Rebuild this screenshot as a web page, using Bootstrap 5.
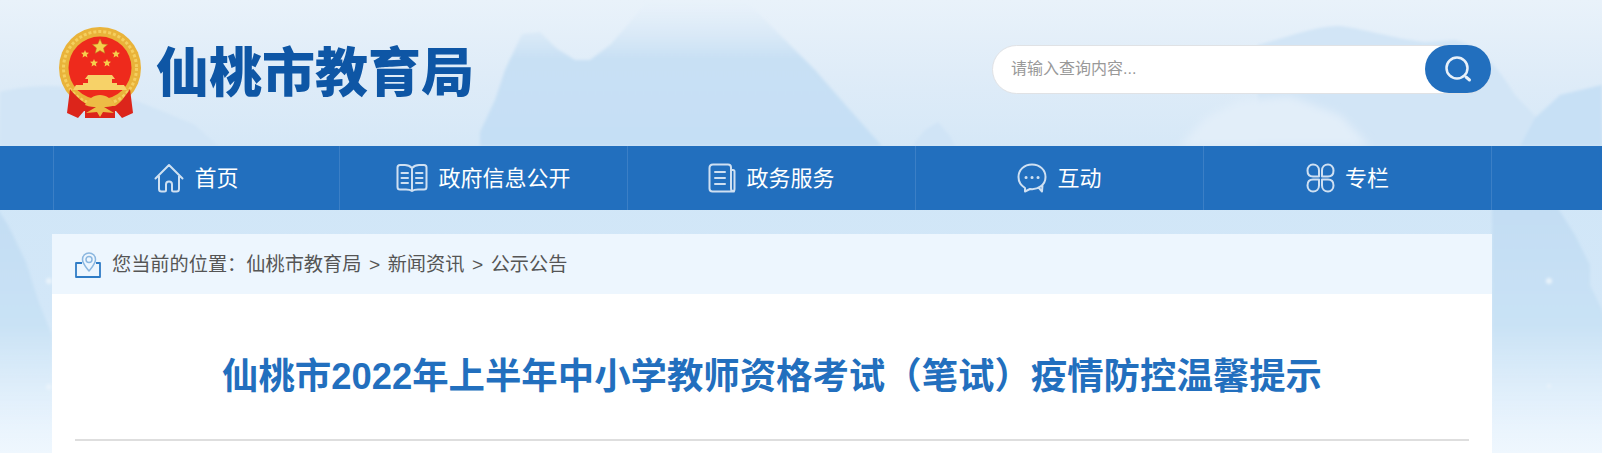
<!DOCTYPE html>
<html lang="zh-CN">
<head>
    <meta charset="utf-8">
    <title>仙桃市教育局</title>
    <link href="https://cdn.jsdelivr.net/npm/bootstrap@5.3.0/dist/css/bootstrap.min.css" rel="stylesheet">
    <style>
        html, body { height: 100%; }
        body {
            font-family: "Liberation Sans", "Noto Sans CJK SC", sans-serif;
            background: #eef6fd;
            overflow: hidden;
        }
        .page-wrap { height: 453px; overflow: hidden; z-index: 0; }
        .page-bg { position: absolute; top: 0; left: 0; z-index: -1; }
        .site-inner { width: 1440px; margin-left: 52px; }

        .top-head { height: 146px; }
        .emblem { width: 86px; height: 92px; margin-left: 5px; flex: none; }
        .site-name {
            color: #0e56a5;
            font-size: 53px;
            font-weight: 900;
            line-height: 1;
            margin: 0 0 0 13px;
        }
        .search-box {
            width: 499px;
            height: 49px;
            margin-right: 1px;
            border: 1px solid #e0e2e5;
        }
        .search-box .form-control {
            border: 0;
            background: transparent;
            box-shadow: none;
            padding: 0 0 0 18px;
            font-size: 16px;
            color: #555;
        }
        .search-box .form-control::placeholder { color: #999; }
        .search-btn {
            width: 66px;
            height: 48px;
            margin: -1px -1px -1px 0;
            padding: 0;
            border: 0;
            border-radius: 24px;
            background: #226fbe;
            flex: none;
        }
        .search-btn:hover { background: #226fbe; }

        .main-nav { background: #226fbe; height: 64px; }
        .main-nav .site-inner { height: 64px; border-left: 1px solid #3b7fc6; margin-left: 53px; width: 1439px; }
        .nav-cell {
            width: 288px;
            height: 64px;
            gap: 10px;
            color: #fff;
            font-size: 22px;
            text-decoration: none;
            border-right: 1px solid #3b7fc6;
        }
        .nav-cell:first-child { width: 286px; }
        .nav-cell:hover { color: #fff; }
        .nav-cell svg { flex: none; fill: none; stroke: #cfe0f2; stroke-width: 2; stroke-linejoin: round; stroke-linecap: round; }

        .panel-box { margin-top: 24px; background: #fff; height: 300px; }
        .crumb-bar {
            height: 60px;
            background: #edf6fe;
            padding: 2px 0 0 23px;
            gap: 11px;
            color: #555;
            font-size: 19.200px;
        }
        .crumb-bar a { color: #555; text-decoration: none; }
        .crumb-sep { margin: 0 7.500px; }
        .article-title {
            color: #226fbe;
            font-size: 36.400px;
            font-weight: 700;
            line-height: 44px;
            text-align: center;
            margin: 61px 23px 0;
            padding-bottom: 40px;
            border-bottom: 2px solid #dedede;
            white-space: nowrap;
        }
    </style>
</head>
<body>
<div class="page-wrap position-relative">
    <!-- fundo: montanhas -->
    <svg class="page-bg" width="1602" height="453" viewBox="0 0 1602 453" aria-hidden="true">
        <defs>
            <linearGradient id="skyTop" x1="0" y1="0" x2="0" y2="1">
                <stop offset="0" stop-color="#e9f2fa"/>
                <stop offset="0.5" stop-color="#dfecf8"/>
                <stop offset="1" stop-color="#d6e8f7"/>
            </linearGradient>
            <linearGradient id="skyLow" x1="0" y1="0" x2="0" y2="1">
                <stop offset="0" stop-color="#d0e6f7"/>
                <stop offset="0.55" stop-color="#d3e7f8"/>
                <stop offset="1" stop-color="#eff7fe"/>
            </linearGradient>
            <linearGradient id="hill" gradientUnits="userSpaceOnUse" x1="0" y1="0" x2="0" y2="146">
                <stop offset="0" stop-color="#dfecf8" stop-opacity="0"/>
                <stop offset="0.4" stop-color="#c8e0f4"/>
                <stop offset="1" stop-color="#c5dff5"/>
            </linearGradient>
            <linearGradient id="hillLow" gradientUnits="userSpaceOnUse" x1="0" y1="210" x2="0" y2="440">
                <stop offset="0" stop-color="#c3ddf3"/>
                <stop offset="0.5" stop-color="#c9e2f5"/>
                <stop offset="1" stop-color="#e8f3fc" stop-opacity="0"/>
            </linearGradient>
            <filter id="soft"><feGaussianBlur stdDeviation="1.500"/></filter>
            <filter id="softer" x="-20%" y="-20%" width="140%" height="140%"><feGaussianBlur stdDeviation="4"/></filter>
        </defs>
        <rect width="1602" height="146" fill="url(#skyTop)"/>
        <rect y="146" width="1602" height="307" fill="url(#skyLow)"/>
        <g filter="url(#soft)">
            <path d="M0 92 C30 84 70 84 105 92 C140 100 170 115 195 125 L218 146 L0 146Z" fill="#d2e5f6"/>
            <path d="M480 132 L495 100 L505 70 L522 34 L540 32 L556 48 L575 60 L590 60 L610 45 L632 20 L648 0 L745 0 L790 45 L815 70 L850 110 L882 146 L480 146Z" fill="url(#hill)"/>
            <path d="M912 146 L925 130 L938 122 L950 136 L955 146Z" fill="#d0e4f6"/>
            <path d="M1258 45 C1290 36 1320 25 1340 26 C1370 30 1390 38 1425 42 L1455 40 C1480 45 1500 70 1515 95 L1537 118 L1560 95 L1602 85 L1602 146 L1258 146Z" fill="#d2e5f6"/>
            <path d="M1535 118 L1560 95 L1602 85 L1602 146 L1520 146Z" fill="#c7e0f5"/>
        </g>
        <path d="M1180 146 L1205 118 L1240 100 L1290 96 L1340 115 L1370 146Z" fill="#e2eef9" filter="url(#softer)"/>
        <g filter="url(#soft)">
            <path d="M-5 205 L8 225 L26 262 L38 300 L52 335 L52 453 L-5 453Z" fill="url(#hillLow)"/>
            <path d="M1492 205 L1556 205 L1575 235 L1590 265 L1590 285 L1607 320 L1607 453 L1492 453Z" fill="url(#hillLow)"/>
        </g>
        <g fill="#e9f3fb" filter="url(#soft)">
            <circle cx="49" cy="281" r="3"/>
            <circle cx="49" cy="387" r="3"/>
            <circle cx="1549" cy="281" r="3"/>
            <circle cx="1549" cy="386" r="2"/>
        </g>
    </svg>

    <header class="top-head site-inner d-flex align-items-center justify-content-between">
        <div class="d-flex align-items-center">
            <svg class="emblem" viewBox="57 27 86 92" aria-label="国徽">
                <circle cx="100" cy="68" r="41" fill="#e9b33a"/>
                <circle cx="100" cy="68" r="36.500" fill="none" stroke="#f5cf5f" stroke-width="3" stroke-dasharray="3 2"/>
                <circle cx="100" cy="68" r="31.500" fill="#ee2a1c"/>
                <path d="M100 39 L102.200 44 L107.600 44.500 L103.500 48 L104.700 53.300 L100 50.500 L95.300 53.300 L96.500 48 L92.400 44.500 L97.800 44Z" fill="#f6cf4c" stroke="#b98a20" stroke-width=".5"/>
                <path d="M85 50 L86.100 52.600 L89 52.800 L86.800 54.700 L87.500 57.500 L85 56 L82.500 57.500 L83.200 54.700 L81 52.800 L83.900 52.600Z" fill="#f6cf4c"/>
                <path d="M116 50 L117.100 52.600 L120 52.800 L117.800 54.700 L118.500 57.500 L116 56 L113.500 57.500 L114.200 54.700 L112 52.800 L114.900 52.600Z" fill="#f6cf4c"/>
                <path d="M94 59 L95.100 61.600 L98 61.800 L95.800 63.700 L96.500 66.500 L94 65 L91.500 66.500 L92.200 63.700 L90 61.800 L92.900 61.600Z" fill="#f6cf4c"/>
                <path d="M107 59 L108.100 61.600 L111 61.800 L108.800 63.700 L109.500 66.500 L107 65 L104.500 66.500 L105.200 63.700 L103 61.800 L105.900 61.600Z" fill="#f6cf4c"/>
                <!-- portao -->
                <path d="M88 75 L112 75 L115 79 L112 79 L112 83 L88 83 L88 79 L85 79Z" fill="#f7d268"/>
                <path d="M76 85 L124 85 L127 90 L73 90Z" fill="#f7d268"/>
                <path d="M83 83 H117 V85 H83Z" fill="#f7d268"/>
                <!-- faixas vermelhas -->
                <path d="M70 89 C76 97 84 103 90 106 L115 106 C120 103 125 97 130 89 L133 113 L122 118 L116 111 L84 111 L78 118 L67 113Z" fill="#dc251b"/>
                <path d="M85 111 H115 V118 H85Z" fill="#dc251b"/>
                <path d="M100 95 C106 95 112 99 115 105 C110 107 106 107 104 107 L114 113 L103 112 L100 117 L97 112 L86 113 L96 107 C94 107 90 107 85 105 C88 99 94 95 100 95Z" fill="#edbb45"/>
            </svg>
            <h1 class="site-name">仙桃市教育局</h1>
        </div>
        <form class="search-box d-flex align-items-center bg-white rounded-pill mb-2" onsubmit="return false">
            <input class="form-control" type="text" placeholder="请输入查询内容...">
            <button class="btn search-btn d-flex align-items-center justify-content-center" type="submit" aria-label="搜索">
                <svg width="30" height="30" viewBox="0 0 30 30" fill="none" stroke="#e8f1fa" stroke-linecap="round">
                    <circle cx="14" cy="14" r="10.500" stroke-width="2.500"/>
                    <path d="M23 23 L26.500 26" stroke-width="3"/>
                </svg>
            </button>
        </form>
    </header>

    <nav class="main-nav">
        <div class="site-inner d-flex">
            <a class="nav-cell d-flex align-items-center justify-content-center" href="#">
                <svg width="30" height="30" viewBox="0 0 30 30"><path d="M1.500 15.500 L15 2 L28.500 15.500 M5 13 L5 26 Q5 28.500 7.500 28.500 L10.500 28.500 Q12 28.500 12 27 L12 21.500 Q12 18.500 15 18.500 Q18 18.500 18 21.500 L18 27 Q18 28.500 19.500 28.500 L22.500 28.500 Q25 28.500 25 26 L25 13"/></svg>
                <span>首页</span>
            </a>
            <a class="nav-cell d-flex align-items-center justify-content-center" href="#">
                <svg width="32" height="30" viewBox="0 0 32 30"><path d="M16 5 Q13 2 9 2 L4 2 Q1.500 2 1.500 4.500 L1.500 24 Q1.500 26.500 4 26.500 L10 26.500 Q14 26.500 16 28 Q18 26.500 22 26.500 L28 26.500 Q30.500 26.500 30.500 24 L30.500 4.500 Q30.500 2 28 2 L23 2 Q19 2 16 5 L16 27 M5.500 10 H12 M5.500 15 H12 M5.500 20 H12 M20 10 H26.500 M20 15 H26.500 M20 20 H26.500"/></svg>
                <span>政府信息公开</span>
            </a>
            <a class="nav-cell d-flex align-items-center justify-content-center" href="#">
                <svg width="28" height="30" viewBox="0 0 28 30"><path d="M5 1.500 L20 1.500 Q23 1.500 23 4.500 L23 25.500 Q23 28.500 26 28.500 L4.500 28.500 Q1.500 28.500 1.500 25.500 L1.500 5 Q1.500 1.500 5 1.500Z M23 7 L25 7 Q26.500 7 26.500 8.500 L26.500 26 Q26.500 28.500 24.500 28.500 M7 9 H17 M7 15 H17 M7 21 H17"/></svg>
                <span>政务服务</span>
            </a>
            <a class="nav-cell d-flex align-items-center justify-content-center" href="#">
                <svg width="30" height="30" viewBox="0 0 30 30"><path d="M15 1.500 C7 1.500 1.500 7 1.500 14 C1.500 19 4 22.500 8 25 L8 28.500 L13 26 C21 27 28.500 22 28.500 14 C28.500 7 23 1.500 15 1.500Z M22 25 L25 28.500 L25.500 22.500"/><path d="M9 14.500 H9.100 M15 14.500 H15.100 M21 14.500 H21.100" stroke-width="3"/></svg>
                <span>互动</span>
            </a>
            <a class="nav-cell d-flex align-items-center justify-content-center" href="#">
                <svg width="29" height="30" viewBox="0 0 29 30"><path d="M13 13.500 L7 13.500 C3.500 13.500 1.500 11 1.500 7.500 C1.500 4 4 1.500 7 1.500 C10.500 1.500 13 4 13 7.500Z M16 13.500 L22 13.500 C25.500 13.500 27.500 11 27.500 7.500 C27.500 4 25 1.500 22 1.500 C18.500 1.500 16 4 16 7.500Z M13 16.500 L7 16.500 C3.500 16.500 1.500 19 1.500 22.500 C1.500 26 4 28.500 7 28.500 C10.500 28.500 13 26 13 22.500Z M16 16.500 L22 16.500 C25.500 16.500 27.500 19 27.500 22.500 C27.500 26 25 28.500 22 28.500 C18.500 28.500 16 26 16 22.500Z"/></svg>
                <span>专栏</span>
            </a>
        </div>
    </nav>

    <main class="panel-box site-inner">
        <div class="crumb-bar d-flex align-items-center">
            <svg width="26" height="26" viewBox="0 0 26 26" fill="none" stroke="#2f7cc6" stroke-width="1.500" stroke-linejoin="round">
                <path d="M7 11 L1 11 L1 25 L25 25 L25 11 L21 11" stroke-width="1.800"/>
                <path d="M14 19 C10 14 7.500 11.500 7.500 7.500 C7.500 3.500 10.500 1 14 1 C17.500 1 20.500 3.500 20.500 7.500 C20.500 11.500 18 14 14 19Z" stroke="#8bb7e0"/>
                <circle cx="14" cy="7.500" r="3" stroke="#8bb7e0"/>
            </svg>
            <div class="text-nowrap">您当前的位置：<a href="#">仙桃市教育局</a><span class="crumb-sep">&gt;</span><a href="#">新闻资讯</a><span class="crumb-sep">&gt;</span><a href="#">公示公告</a></div>
        </div>
        <h2 class="article-title">仙桃市2022年上半年中小学教师资格考试（笔试）疫情防控温馨提示</h2>
    </main>
</div>
<script src="https://cdn.jsdelivr.net/npm/bootstrap@5.3.0/dist/js/bootstrap.bundle.min.js"></script>
</body>
</html>
